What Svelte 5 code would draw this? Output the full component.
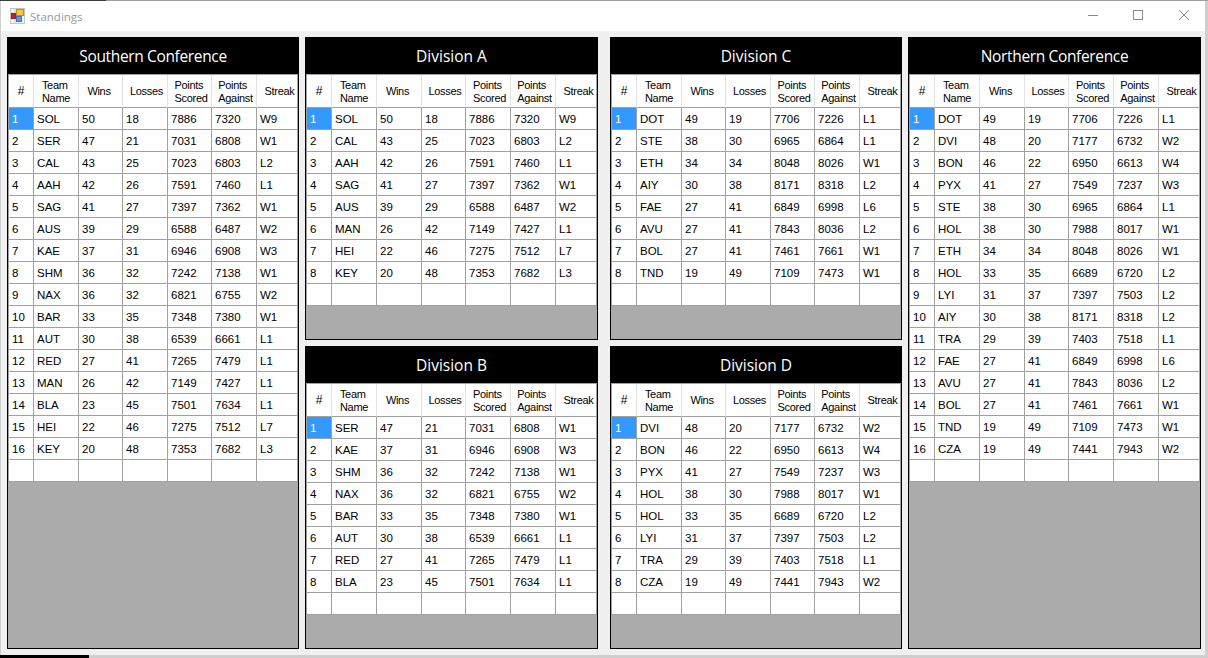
<script lang="ts">
  type Row = [string, number, number, number, number, string];

  const south: Row[] = [
    ['SOL', 50, 18, 7886, 7320, 'W9'],
    ['SER', 47, 21, 7031, 6808, 'W1'],
    ['CAL', 43, 25, 7023, 6803, 'L2'],
    ['AAH', 42, 26, 7591, 7460, 'L1'],
    ['SAG', 41, 27, 7397, 7362, 'W1'],
    ['AUS', 39, 29, 6588, 6487, 'W2'],
    ['KAE', 37, 31, 6946, 6908, 'W3'],
    ['SHM', 36, 32, 7242, 7138, 'W1'],
    ['NAX', 36, 32, 6821, 6755, 'W2'],
    ['BAR', 33, 35, 7348, 7380, 'W1'],
    ['AUT', 30, 38, 6539, 6661, 'L1'],
    ['RED', 27, 41, 7265, 7479, 'L1'],
    ['MAN', 26, 42, 7149, 7427, 'L1'],
    ['BLA', 23, 45, 7501, 7634, 'L1'],
    ['HEI', 22, 46, 7275, 7512, 'L7'],
    ['KEY', 20, 48, 7353, 7682, 'L3']
  ];

  const north: Row[] = [
    ['DOT', 49, 19, 7706, 7226, 'L1'],
    ['DVI', 48, 20, 7177, 6732, 'W2'],
    ['BON', 46, 22, 6950, 6613, 'W4'],
    ['PYX', 41, 27, 7549, 7237, 'W3'],
    ['STE', 38, 30, 6965, 6864, 'L1'],
    ['HOL', 38, 30, 7988, 8017, 'W1'],
    ['ETH', 34, 34, 8048, 8026, 'W1'],
    ['HOL', 33, 35, 6689, 6720, 'L2'],
    ['LYI', 31, 37, 7397, 7503, 'L2'],
    ['AIY', 30, 38, 8171, 8318, 'L2'],
    ['TRA', 29, 39, 7403, 7518, 'L1'],
    ['FAE', 27, 41, 6849, 6998, 'L6'],
    ['AVU', 27, 41, 7843, 8036, 'L2'],
    ['BOL', 27, 41, 7461, 7661, 'W1'],
    ['TND', 19, 49, 7109, 7473, 'W1'],
    ['CZA', 19, 49, 7441, 7943, 'W2']
  ];

  const divA: Row[] = [
    ['SOL', 50, 18, 7886, 7320, 'W9'],
    ['CAL', 43, 25, 7023, 6803, 'L2'],
    ['AAH', 42, 26, 7591, 7460, 'L1'],
    ['SAG', 41, 27, 7397, 7362, 'W1'],
    ['AUS', 39, 29, 6588, 6487, 'W2'],
    ['MAN', 26, 42, 7149, 7427, 'L1'],
    ['HEI', 22, 46, 7275, 7512, 'L7'],
    ['KEY', 20, 48, 7353, 7682, 'L3']
  ];

  const divB: Row[] = [
    ['SER', 47, 21, 7031, 6808, 'W1'],
    ['KAE', 37, 31, 6946, 6908, 'W3'],
    ['SHM', 36, 32, 7242, 7138, 'W1'],
    ['NAX', 36, 32, 6821, 6755, 'W2'],
    ['BAR', 33, 35, 7348, 7380, 'W1'],
    ['AUT', 30, 38, 6539, 6661, 'L1'],
    ['RED', 27, 41, 7265, 7479, 'L1'],
    ['BLA', 23, 45, 7501, 7634, 'L1']
  ];

  const divC: Row[] = [
    ['DOT', 49, 19, 7706, 7226, 'L1'],
    ['STE', 38, 30, 6965, 6864, 'L1'],
    ['ETH', 34, 34, 8048, 8026, 'W1'],
    ['AIY', 30, 38, 8171, 8318, 'L2'],
    ['FAE', 27, 41, 6849, 6998, 'L6'],
    ['AVU', 27, 41, 7843, 8036, 'L2'],
    ['BOL', 27, 41, 7461, 7661, 'W1'],
    ['TND', 19, 49, 7109, 7473, 'W1']
  ];

  const divD: Row[] = [
    ['DVI', 48, 20, 7177, 6732, 'W2'],
    ['BON', 46, 22, 6950, 6613, 'W4'],
    ['PYX', 41, 27, 7549, 7237, 'W3'],
    ['HOL', 38, 30, 7988, 8017, 'W1'],
    ['HOL', 33, 35, 6689, 6720, 'L2'],
    ['LYI', 31, 37, 7397, 7503, 'L2'],
    ['TRA', 29, 39, 7403, 7518, 'L1'],
    ['CZA', 19, 49, 7441, 7943, 'W2']
  ];
</script>

{#snippet standings(title: string, rows: Row[], cls: string)}
  <section class="panel {cls}">
    <h2>{title}</h2>
    <table>
      <colgroup>
        <col class="c-rank" /><col class="c-name" /><col class="c-wins" /><col class="c-loss" /><col class="c-for" /><col class="c-against" /><col class="c-streak" />
      </colgroup>
      <thead>
        <tr>
          <th class="hash">#</th>
          <th><span>Team<br />Name</span></th>
          <th><span class="shift">Wins</span></th>
          <th><span class="nudge">Losses</span></th>
          <th><span class="nudge">Points<br />Scored</span></th>
          <th><span class="nudge">Points<br />Against</span></th>
          <th><span class="nudge wider">Streak</span></th>
        </tr>
      </thead>
      <tbody>
        {#each rows as row, i}
          <tr>
            <td class:selected={i === 0}>{i + 1}</td>
            {#each row as value}
              <td>{value}</td>
            {/each}
          </tr>
        {/each}
        <tr class="blank">
          <td></td><td></td><td></td><td></td><td></td><td></td><td></td>
        </tr>
      </tbody>
    </table>
  </section>
{/snippet}

<div class="desktop">
  <div class="window">
    <header class="titlebar">
      <svg class="app-icon" width="16" height="16" viewBox="0 0 16 16" aria-hidden="true">
        <rect x="0.5" y="0.5" width="14" height="15" fill="#f4f4f4" stroke="#c4c4c4" />
        <path d="M5 1v14M1 5h4M1 11h4" stroke="#d0d0d0" />
        <rect x="1.500" y="5.500" width="4" height="5" fill="#b8262a" stroke="#7d2a2a" />
        <rect x="6.500" y="1.500" width="7" height="6" fill="#f7c640" stroke="#c08a25" />
        <rect x="6.500" y="8.500" width="5" height="5" fill="#5b9be8" stroke="#3f6fc0" />
      </svg>
      <span class="caption">Standings</span>
      <div class="controls" aria-hidden="true">
        <svg width="46" height="30" viewBox="0 0 46 30"><path d="M21 14.500h10" stroke="#8a8a8a" /></svg>
        <svg width="46" height="30" viewBox="0 0 46 30"><rect x="20.500" y="9.500" width="9" height="9" fill="none" stroke="#8a8a8a" /></svg>
        <svg width="46" height="30" viewBox="0 0 46 30"><path d="M20 9l10 10M30 9l-10 10" stroke="#8a8a8a" /></svg>
      </div>
    </header>
    <main class="board">
      {@render standings('Southern Conference', south, 'narrow conference')}
      <div class="divisions">
        <div class="stack">
          {@render standings('Division A', divA, 'wide')}
          {@render standings('Division B', divB, 'wide')}
        </div>
        <div class="stack">
          {@render standings('Division C', divC, 'narrow')}
          {@render standings('Division D', divD, 'narrow')}
        </div>
      </div>
      {@render standings('Northern Conference', north, 'wide conference')}
    </main>
  </div>
</div>

<style>
  :global(body) {
    margin: 0;
    background: #c8c8c8;
  }

  .desktop {
    width: 1208px;
    height: 658px;
    overflow: hidden;
    box-sizing: border-box;
    padding-top: 1px;
    background-color: #cfcfcf;
    background-image:
      linear-gradient(#3c3c3c, #3c3c3c),
      linear-gradient(#a0a0a0, #a0a0a0),
      linear-gradient(#000, #000);
    background-repeat: no-repeat;
    background-size: 106px 1px, 100% 1px, 89px 3px;
    background-position: 0 0, 0 0, 0 100%;
  }

  .window {
    width: 1204px;
    height: 654px;
    margin-left: 1px;
    background: #f0f0f0;
    display: flex;
    flex-direction: column;
  }

  .titlebar {
    height: 30px;
    flex: none;
    background: #fff;
    display: flex;
    align-items: center;
    padding-left: 9px;
  }

  .app-icon {
    margin-right: 4px;
    margin-top: -1px;
  }

  .caption {
    font: 11.5px "Open Sans", "Noto Sans", sans-serif;
    color: #999;
  }

  .controls {
    margin-left: auto;
    display: flex;
    font-size: 0;
  }

  .board {
    flex: 1;
    display: flex;
    gap: 6px;
    padding: 6px 0 6px 6px;
    min-height: 0;
  }

  .divisions {
    display: flex;
    gap: 12px;
  }

  .stack {
    display: flex;
    flex-direction: column;
    gap: 6px;
  }

  .stack .panel {
    flex: 1;
  }

  .panel {
    box-sizing: border-box;
    background: #ababab;
    border: 1px solid #000;
    border-top: 0;
    display: flex;
    flex-direction: column;
    overflow: hidden;
  }

  .narrow {
    width: 292px;
  }

  .wide {
    width: 293px;
  }

  h2 {
    margin: 0;
    height: 37px;
    flex: none;
    background: #000;
    color: #fff;
    font: 400 15.5px/39px "Open Sans", "Noto Sans", sans-serif;
    text-align: center;
  }

  .conference h2 {
    letter-spacing: -0.35px;
  }

  table {
    table-layout: fixed;
    border-collapse: separate;
    border-spacing: 0;
    width: 100%;
    background: #fff;
    border-left: 1px solid #a0a0a0;
    border-top: 1px solid #a0a0a0;
    box-sizing: border-box;
    font: 11.5px "Liberation Sans", Arial, sans-serif;
    color: #000;
  }

  .c-rank { width: 25px; }
  .c-name { width: 45px; }
  .c-wins { width: 44px; }
  .c-loss { width: 45px; }
  .c-for { width: 44px; }
  .c-against { width: 45px; }
  .c-streak { width: 41px; }

  .wide .c-wins { width: 45px; }
  .wide .c-loss { width: 44px; }
  .wide .c-for { width: 45px; }

  th {
    height: 33px;
    padding: 1px 0 0;
    box-sizing: border-box;
    font-size: 11px;
    font-weight: 400;
    letter-spacing: -0.3px;
    line-height: 13px;
    text-align: center;
    vertical-align: middle;
    border-right: 1px solid #e3e3e3;
    border-bottom: 1px solid #a0a0a0;
    white-space: nowrap;
    overflow: hidden;
  }

  th.hash {
    font-size: 12px;
    letter-spacing: 0;
  }

  th span {
    display: inline-block;
    text-align: left;
  }

  th .shift {
    margin-right: 3px;
  }

  th .nudge {
    margin-left: 3px;
  }

  th .wider {
    margin-left: 5px;
  }

  td {
    height: 22px;
    padding: 0 0 0 3px;
    box-sizing: border-box;
    border-right: 1px solid #a0a0a0;
    border-bottom: 1px solid #a0a0a0;
    white-space: nowrap;
    overflow: hidden;
  }

  td.selected {
    background: #3399ff;
    color: #fff;
  }

  th:last-child {
    border-right-color: #a0a0a0;
  }
</style>
